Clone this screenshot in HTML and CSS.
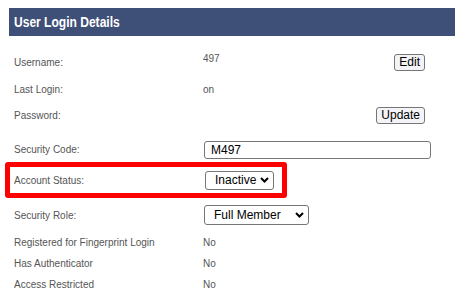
FILE: index.html
```html
<!DOCTYPE html>
<html lang="en">
<head>
    <meta charset="UTF-8">
    <title>User Login Details</title>
    <link rel="stylesheet" href="styles.css">
</head>
<body>
    <div class="panel">
        <header class="panel-title"><span class="title-text">User Login Details</span></header>
        <div class="details">
            <div class="row row-user">
                <span class="label">Username:</span>
                <div class="value split">
                    <span class="value-text top">497</span>
                    <button class="btn">Edit</button>
                </div>
            </div>
            <div class="row">
                <span class="label">Last Login:</span>
                <span class="value value-text">on</span>
            </div>
            <div class="row">
                <span class="label">Password:</span>
                <div class="value split">
                    <span></span>
                    <button class="btn">Update</button>
                </div>
            </div>
            <div class="row row-code">
                <span class="label">Security Code:</span>
                <div class="value">
                    <input class="field" type="text" value="M497">
                </div>
            </div>
            <div class="row highlight">
                <span class="label">Account Status:</span>
                <div class="value">
                    <span class="select-wrap">
                        <select class="picker status">
                            <option>Inactive</option>
                            <option>Active</option>
                        </select>
                        <svg class="chevron" width="9" height="6" viewBox="0 0 9 6"><path d="M1 1 L4.5 4.5 L8 1" fill="none" stroke="#000" stroke-width="2"/></svg>
                    </span>
                </div>
            </div>
            <div class="row row-role">
                <span class="label">Security Role:</span>
                <div class="value">
                    <span class="select-wrap">
                        <select class="picker role">
                            <option>Full Member</option>
                            <option>Guest</option>
                        </select>
                        <svg class="chevron" width="9" height="6" viewBox="0 0 9 6"><path d="M1 1 L4.5 4.5 L8 1" fill="none" stroke="#000" stroke-width="2"/></svg>
                    </span>
                </div>
            </div>
            <div class="row small">
                <span class="label">Registered for Fingerprint Login</span>
                <span class="value value-text">No</span>
            </div>
            <div class="row small">
                <span class="label">Has Authenticator</span>
                <span class="value value-text">No</span>
            </div>
            <div class="row small">
                <span class="label">Access Restricted</span>
                <span class="value value-text">No</span>
            </div>
        </div>
    </div>
</body>
</html>
```

FILE: styles.css
```css
body {
    margin: 0;
    font-family: 'Liberation Sans', Arial, sans-serif;
    background: #fff;
    color: #555;
}
.panel {
    padding: 8px 7px 0 9px;
}
.panel-title {
    background: #3f5078;
    color: #fff;
    font-weight: bold;
    font-size: 14px;
    height: 28px;
    line-height: 28px;
    padding-left: 5px;
}
.title-text {
    display: inline-block;
    transform: scaleX(0.86);
    transform-origin: left center;
}
.details {
    padding-top: 14px;
}
.row {
    display: flex;
    align-items: center;
    height: 24px;
    margin-bottom: 2px;
    padding-left: 5px;
}
.label {
    width: 189px;
    flex: none;
    font-size: 10px;
    color: #555;
}
.value {
    flex: 1;
}
.value-text {
    font-size: 10px;
    color: #555;
}
.split {
    display: flex;
    justify-content: space-between;
    align-items: center;
    padding-right: 30px;
}
.top {
    align-self: flex-start;
    margin-top: -1px;
}
.row-user {
    height: 25px;
}
.btn {
    font-family: 'Liberation Sans', Arial, sans-serif;
    font-size: 12px;
    color: #000;
    background: #f4f4f8;
    border: 1px solid #767676;
    border-radius: 3px;
    padding: 0 4px;
    height: 17px;
    line-height: 15px;
}
.row-code {
    margin-top: 10px;
    margin-bottom: 1px;
}
.field {
    box-sizing: border-box;
    width: 227px;
    height: 18px;
    margin: 0 0 0 1px;
    border: 1px solid #767676;
    border-radius: 3px;
    padding: 0 6px;
    font-family: 'Liberation Sans', Arial, sans-serif;
    font-size: 12px;
    color: #000;
}
.highlight {
    box-sizing: border-box;
    height: 36px;
    border: 5px solid #ff0000;
    border-radius: 3px;
    width: 282px;
    margin-left: -4px;
    padding-left: 4px;
    margin-bottom: 5px;
}
.highlight .label {
    width: 190px;
}
.select-wrap {
    position: relative;
    display: inline-block;
    margin-left: 1px;
}
.picker {
    -webkit-appearance: none;
    appearance: none;
    box-sizing: border-box;
    display: block;
    font-family: 'Liberation Sans', Arial, sans-serif;
    font-size: 12px;
    color: #000;
    background: #fff;
    border: 1px solid #767676;
    border-radius: 3px;
    margin: 0;
    padding: 0 0 0 9px;
}
.chevron {
    position: absolute;
    right: 5px;
    top: 50%;
    margin-top: -3px;
    pointer-events: none;
}
.status {
    width: 69px;
    height: 19px;
}
.role {
    width: 105px;
    height: 20px;
}
.row-role {
    margin-bottom: 5px;
}
.small {
    height: 21px;
    margin-bottom: 0;
}
```
